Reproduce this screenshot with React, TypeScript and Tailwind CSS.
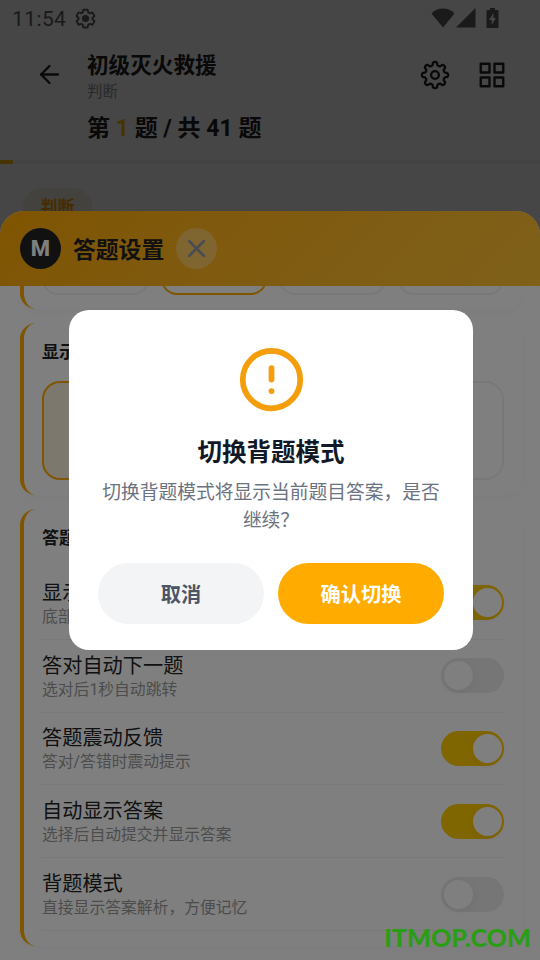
import React from 'react';
import { ArrowLeft, CircleAlert, X } from 'lucide-react';

interface SettingItem {
  title: string;
  desc: string;
  on: boolean;
}

const settings: SettingItem[] = [
  { title: '显示底部按钮', desc: '底部操作栏显示', on: true },
  { title: '答对自动下一题', desc: '选对后1秒自动跳转', on: false },
  { title: '答题震动反馈', desc: '答对/答错时震动提示', on: true },
  { title: '自动显示答案', desc: '选择后自动提交并显示答案', on: true },
  { title: '背题模式', desc: '直接显示答案解析，方便记忆', on: false },
];

// 八瓣齿轮轮廓
const gearPath = () => {
  const points: string[] = [];
  for (let i = 0; i < 160; i++) {
    const a = (i / 160) * Math.PI * 2;
    const r = 11.4 + 1.7 * Math.cos(8 * a);
    const t = a + 0.045 * Math.sin(16 * a);
    points.push(`${(15 + r * Math.cos(t)).toFixed(2)} ${(15 + r * Math.sin(t)).toFixed(2)}`);
  }
  return `M${points.join('L')}Z`;
};

const Toggle: React.FC<{ on: boolean }> = ({ on }) => (
  <div className={`flex h-[35px] w-[63px] shrink-0 items-center rounded-full ${on ? 'justify-end bg-[#ffcc00] pr-[2px]' : 'justify-start bg-[#ececec] pl-[3px]'}`}>
    <div className="h-[29px] w-[29px] rounded-full bg-white shadow-[0_2px_8px_rgba(0,0,0,0.06)]" />
  </div>
);

const StatusBar: React.FC = () => (
  <div className="flex h-[35px] items-center pr-[41px] pl-[12px] text-[#5f5f5f]">
    <span className="pt-[3px] text-[21px] leading-none tracking-[0.4px]">11:54</span>
    <svg className="mt-[2px] ml-[9px] h-[21px] w-[21px]" viewBox="0 0 24 24" fill="none" stroke="currentColor" strokeWidth="2.2" strokeLinejoin="round">
      <path d="M9.6 2h4.8l.7 3 1.8 1 3-.9 2.4 4.1-2.3 2.1v1.6l2.3 2.1-2.4 4.1-3-.9-1.8 1-.7 3H9.6l-.7-3-1.8-1-3 .9L1.7 15 4 12.8v-1.6L1.7 9.1l2.4-4.1 3 .9 1.8-1z" />
      <circle cx="12" cy="12" r="3" fill="currentColor" />
    </svg>
    <div className="ml-auto flex items-center">
      <svg className="h-[20px] w-[24px]" viewBox="0 0 24 20" fill="currentColor">
        <path d="M12 19.5L.5 5.5C3.5 2.3 7.5.5 12 .5s8.5 1.8 11.5 5z" />
      </svg>
      <svg className="ml-[1px] h-[20px] w-[20px]" viewBox="0 0 20 20" fill="currentColor">
        <path d="M0 19.5L19.5 0v19.5z" />
      </svg>
      <svg className="ml-[10px] h-[20px] w-[13px]" viewBox="0 0 13 20" fill="currentColor" fillRule="evenodd">
        <path d="M4 0h5v2h2.5q1 0 1 1v16q0 1-1 1h-10q-1 0-1-1V3q0-1 1-1H4zM7.5 5L3 12h2.7v5L10 10H7.5z" />
      </svg>
    </div>
  </div>
);

const App: React.FC = () => {
  return (
    <div className="relative h-[960px] w-[540px] overflow-hidden bg-white font-['Roboto','Noto_Sans_CJK_SC',sans-serif]">
      <StatusBar />

      {/* 顶部导航 */}
      <header className="flex h-[125px] items-start pr-[33px] pl-[35px] text-[#222]">
        <ArrowLeft className="mt-[25px] h-[29px] w-[29px]" strokeWidth={1.9} />
        <div className="ml-[23px]">
          <h1 className="mt-[15px] text-[21.6px] leading-[32px] font-bold">初级灭火救援</h1>
          <p className="mt-px text-[15.5px] leading-[18px] text-[#999]">判断</p>
          <p className="mt-[11px] text-[23px] leading-[34px] font-bold">
            第 <span className="text-[#ffc400]">1</span> 题 / 共 41 题
          </p>
        </div>
        <svg className="mt-[25px] ml-auto h-[30px] w-[30px]" viewBox="0 0 30 30" fill="none" stroke="currentColor" strokeWidth="2.3" strokeLinejoin="round">
          <path d={gearPath()} />
          <circle cx="15" cy="15" r="3.9" />
        </svg>
        <svg className="mt-[25px] ml-[27px] h-[30px] w-[30px]" viewBox="0 0 24 24" fill="none" stroke="currentColor" strokeWidth="1.9" strokeLinejoin="round">
          <path d="M3 3h7v7H3zM14 3h7v7h-7zM14 14h7v7h-7zM3 14h7v7H3z" />
        </svg>
      </header>
      <div className="h-[4px] bg-[#f4f4f4]">
        <div className="h-full w-[13px] bg-[#ffc400]" />
      </div>
      <div className="mt-[24px] ml-[23px] flex h-[38px] w-[69px] items-center justify-center rounded-full bg-[#faf3e3] pt-px text-[17px] font-bold text-[#ffa500]">判断</div>

      <div className="absolute inset-0 bg-black/45" />

      {/* 设置面板 */}
      <section className="absolute inset-x-0 top-[211px] bottom-0 overflow-hidden rounded-t-[24px] bg-white">
        <div className="flex h-[75px] items-center bg-linear-135 from-[#ffaa00] to-[#ffc233] px-[20px]">
          <div className="flex h-[41px] w-[41px] items-center justify-center rounded-full bg-[#222] text-[22px] font-extrabold text-white">M</div>
          <h2 className="ml-[12px] pt-[5px] text-[22.8px] font-bold text-[#222]">答题设置</h2>
          <div className="ml-[12px] flex h-[41px] w-[41px] items-center justify-center rounded-full bg-white/30 pr-px text-[#9298ab]">
            <X className="h-[29px] w-[29px]" strokeWidth={2.2} />
          </div>
        </div>

        <div className="h-[674px] overflow-hidden pr-[18px] pl-[20px]">
          <div className="flex h-[23px] items-end overflow-hidden rounded-br-[16px] rounded-bl-[16px] border-l-4 border-[#ffaa00] px-[18px] pb-[14px] shadow-[0_3px_10px_rgba(0,0,0,0.03)]">
            <div className="grid flex-1 grid-cols-4 gap-[12px]">
              {[0, 1, 2, 3].map((i) => (
                <div key={i} className={`h-[60px] rounded-[16px] border-2 ${i === 1 ? 'border-[#ffaa00]' : 'border-[#f0f0f0]'}`} />
              ))}
            </div>
          </div>

          <div className="mt-[14px] h-[172px] rounded-[16px] border-l-4 border-[#ffaa00] px-[18px] pt-[16px] shadow-[0_3px_10px_rgba(0,0,0,0.03)]">
            <h3 className="text-[17px] leading-[26px] font-bold text-[#222]">显示设置</h3>
            <div className="mt-[16px] grid grid-cols-2 gap-[12px]">
              <div className="h-[99px] rounded-[18px] border-2 border-[#ffaa00] bg-[#fbf1dc]" />
              <div className="h-[99px] rounded-[18px] border-2 border-[#f0f0f0]" />
            </div>
          </div>

          <div className="mt-[14px] h-[437px] rounded-[16px] border-l-4 border-[#ffaa00] px-[18px] pt-[16px] shadow-[0_3px_10px_rgba(0,0,0,0.03)]">
            <h3 className="text-[17px] leading-[26px] font-bold text-[#222]">答题设置</h3>
            <div className="mt-[16px]">
              {settings.map((item) => (
                <div key={item.title} className="flex h-[72.8px] items-center justify-between border-b border-[#f2f2f2]">
                  <div className="pt-[2px]">
                    <p className="text-[20.2px] leading-[26px] text-[#222]">{item.title}</p>
                    <p className="text-[15.8px] leading-[22px] text-[#999]">{item.desc}</p>
                  </div>
                  <Toggle on={item.on} />
                </div>
              ))}
            </div>
          </div>
        </div>
      </section>

      {/* 确认弹窗 */}
      <div className="absolute inset-0 flex items-center justify-center bg-black/50 pl-[2px]">
        <div className="flex h-[340px] w-[404px] flex-col items-center rounded-[20px] bg-white px-[29px] pt-[35px]">
          <CircleAlert className="h-[69px] w-[69px] text-[#f59e0b]" strokeWidth={2} />
          <h2 className="mt-[21px] text-[24.5px] leading-[36px] font-bold text-[#111827]">切换背题模式</h2>
          <p className="mt-[8px] text-center text-[18.75px] leading-[28px] text-[#6b7280]">切换背题模式将显示当前题目答案，是否继续？</p>
          <div className="mt-[28px] grid w-full grid-cols-2 gap-[14px] text-[20.2px] font-bold">
            <button className="h-[61px] rounded-full bg-[#f3f4f6] pt-[3px] text-[#4b5563]">取消</button>
            <button className="h-[61px] rounded-full bg-[#ffab00] pt-[3px] text-white">确认切换</button>
          </div>
        </div>
      </div>

      <div className="absolute right-[9px] bottom-[6px] font-['Lato',sans-serif] text-[25.2px] leading-[34px] font-black text-[#2a9d14]">ITMOP.COM</div>
    </div>
  );
};

export default App;
